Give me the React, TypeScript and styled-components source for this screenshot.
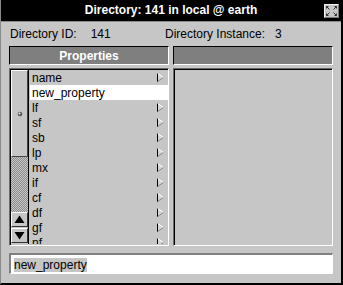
import React from "react";
import styled, { createGlobalStyle } from "styled-components";

const Global = createGlobalStyle`
  html, body { margin: 0; padding: 0; background: #c6c6c6; }
  body { font-family: "Liberation Sans", Arial, sans-serif; }
`;

const Window = styled.div`
  width: 343px;
  height: 285px;
  box-sizing: border-box;
  background: #c6c6c6;
  border-left: 1px solid #8a8a8a;
  border-right: 2px solid #000;
  border-bottom: 2px solid #000;
  display: flex;
  flex-direction: column;
  overflow: hidden;
`;

const TitleBar = styled.div`
  height: 21px;
  background: #000;
  border-bottom: 1px solid #8a8a8a;
  display: grid;
  grid-template-columns: 1fr auto 1fr;
  align-items: center;
`;

const TitleText = styled.div`
  grid-column: 2;
  color: #fff;
  font-weight: bold;
  font-size: 12px;
  line-height: 21px;
  white-space: nowrap;
`;

const CloseButton = styled.div`
  grid-column: 3;
  justify-self: end;
  margin-right: 2px;
  width: 15px;
  height: 14px;
  box-sizing: border-box;
  background: #c6c6c6;
  border: 1px solid;
  border-color: #eee #777 #777 #eee;
  display: flex;
  align-items: center;
  justify-content: center;
`;

const Content = styled.div`
  flex: 1;
  display: flex;
  flex-direction: column;
  padding: 0 8px 9px 8px;
`;

const InfoRow = styled.div`
  height: 24px;
  display: flex;
  align-items: center;
  font-size: 12px;
  color: #000;
  padding-left: 1px;
`;

const InfoGroup = styled.div<{ $width?: number }>`
  display: flex;
  width: ${(p) => (p.$width ? `${p.$width}px` : "auto")};
`;

const InfoValue = styled.span<{ $gap: number }>`
  margin-left: ${(p) => p.$gap}px;
`;

const Panels = styled.div`
  display: grid;
  grid-template-columns: 160px 160px;
  grid-template-rows: 19px 178px;
  column-gap: 4px;
  row-gap: 3px;
`;

const Header = styled.div`
  box-sizing: border-box;
  background: #7f7f7f;
  border: 1px solid;
  border-color: #000 #fff #fff #000;
  color: #fff;
  font-weight: bold;
  font-size: 12px;
  display: flex;
  align-items: center;
  justify-content: center;
`;

const ListBox = styled.div`
  box-sizing: border-box;
  border: 1px solid;
  border-color: #6a6a6a #fff #fff #6a6a6a;
  box-shadow: inset 1px 1px 0 #000;
  padding: 1px 0 1px 1px;
  display: flex;
  overflow: hidden;
`;

const ScrollBar = styled.div`
  width: 17px;
  border-right: 1px solid #000;
  margin-right: 1px;
  display: flex;
  flex-direction: column;
`;

const Thumb = styled.div`
  height: 87px;
  box-sizing: border-box;
  background: #c6c6c6;
  border: 1px solid;
  border-color: #fff #444 #444 #fff;
  display: flex;
  align-items: center;
  justify-content: center;
`;

const Stipple = styled.div`
  flex: 1;
  background: repeating-conic-gradient(#8c8c8c 0 25%, #c6c6c6 0 50%) 0 0 / 2px 2px;
`;

const ArrowButton = styled.div<{ $down?: boolean }>`
  height: 15px;
  box-sizing: border-box;
  background: #c6c6c6;
  border: 1px solid;
  border-color: #fff #333 #333 #fff;
  margin-bottom: 1px;
  display: flex;
  align-items: center;
  justify-content: center;
`;

const Items = styled.div`
  flex: 1;
  display: flex;
  flex-direction: column;
  overflow: hidden;
`;

const Item = styled.div<{ $selected?: boolean }>`
  flex: 0 0 15px;
  height: 15px;
  display: flex;
  align-items: center;
  justify-content: space-between;
  padding: 0 4px 0 2px;
  background: ${(p) => (p.$selected ? "#fff" : "transparent")};
  font-size: 12px;
  color: #000;
`;

const InputField = styled.div`
  margin-top: 7px;
  height: 21px;
  box-sizing: border-box;
  background: #fff;
  border-style: solid;
  border-width: 2px 1px 1px 2px;
  border-color: #808080 #fff #fff #808080;
  padding: 3px 0 0 3px;
  display: flex;
  align-items: flex-start;
`;

const Selection = styled.span`
  background: #c6c6c6;
  font-size: 12px;
  line-height: 14px;
  color: #000;
`;

const SubArrow = () => (
  <svg width="7" height="9" viewBox="0 0 7 9">
    <polygon points="0.5,0.5 6.5,4.5 0.5,8.5" fill="#d4d4d4" />
    <line x1="0.5" y1="0" x2="0.5" y2="9" stroke="#000" />
    <line x1="0.5" y1="0.5" x2="6.5" y2="4.5" stroke="#fff" />
    <line x1="0.5" y1="8.5" x2="6.5" y2="4.5" stroke="#888" />
  </svg>
);

const CloseIcon = () => (
  <svg width="13" height="12" viewBox="0 0 13 12">
    <g stroke="#333" strokeWidth="1" fill="none">
      <path d="M1.5 1.5 L4.5 4.5 M1.5 1.5 H3.5 M1.5 1.5 V3.5" />
      <path d="M11.5 1.5 L8.5 4.5 M11.5 1.5 H9.5 M11.5 1.5 V3.5" />
      <path d="M1.5 10.5 L4.5 7.5 M1.5 10.5 H3.5 M1.5 10.5 V8.5" />
      <path d="M11.5 10.5 L8.5 7.5 M11.5 10.5 H9.5 M11.5 10.5 V8.5" />
    </g>
  </svg>
);

const Triangle = ({ down }: { down?: boolean }) => (
  <svg width="11" height="9" viewBox="0 0 11 9">
    <polygon points={down ? "0.5,1 10.5,1 5.5,8.5" : "0.5,8 10.5,8 5.5,0.5"} fill="#000" />
  </svg>
);

const Dot = () => (
  <svg width="6" height="6" viewBox="0 0 6 6">
    <circle cx="3" cy="3" r="2.3" fill="#555" />
    <circle cx="2.5" cy="2.5" r="1" fill="#eee" />
  </svg>
);

const items = ["name", "new_property", "lf", "sf", "sb", "lp", "mx", "if", "cf", "df", "gf", "nf"];

export default function App() {
  return (
    <>
      <Global />
      <Window>
        <TitleBar>
          <TitleText>Directory: 141 in local @ earth</TitleText>
          <CloseButton>
            <CloseIcon />
          </CloseButton>
        </TitleBar>
        <Content>
          <InfoRow>
            <InfoGroup $width={155}>
              <span>Directory ID:</span>
              <InfoValue $gap={14}>141</InfoValue>
            </InfoGroup>
            <InfoGroup>
              <span>Directory Instance:</span>
              <InfoValue $gap={10}>3</InfoValue>
            </InfoGroup>
          </InfoRow>
          <Panels>
            <Header>Properties</Header>
            <Header />
            <ListBox>
              <ScrollBar>
                <Thumb>
                  <Dot />
                </Thumb>
                <Stipple />
                <ArrowButton>
                  <Triangle />
                </ArrowButton>
                <ArrowButton $down>
                  <Triangle down />
                </ArrowButton>
              </ScrollBar>
              <Items>
                {items.map((name) => (
                  <Item key={name} $selected={name === "new_property"}>
                    <span>{name}</span>
                    {name !== "new_property" && <SubArrow />}
                  </Item>
                ))}
              </Items>
            </ListBox>
            <ListBox />
          </Panels>
          <InputField>
            <Selection>new_property</Selection>
          </InputField>
        </Content>
      </Window>
    </>
  );
}
